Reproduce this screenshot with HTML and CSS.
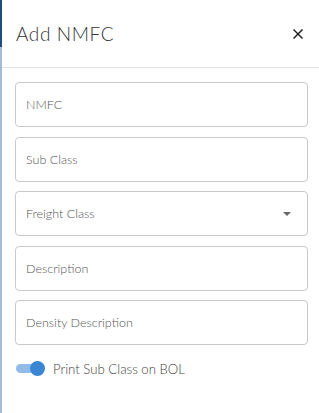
FILE: index.html
```html
<!DOCTYPE html>
<html lang="en">
<head>
    <meta charset="UTF-8">
    <meta name="viewport" content="width=device-width, initial-scale=1.0">
    <title>Add NMFC</title>
    <link rel="stylesheet" href="styles.css">
</head>
<body>
    <div class="backdrop-edge">
        <div class="edge-top"></div>
        <div class="edge-bottom"></div>
    </div>

    <aside class="drawer">
        <header class="drawer-header">
            <h1>Add NMFC</h1>
            <button class="close" aria-label="Close">
                <svg viewBox="0 0 10 10" width="10" height="10" stroke="#222" stroke-width="1.5" stroke-linecap="square">
                    <line x1="1" y1="1" x2="9" y2="9"></line>
                    <line x1="9" y1="1" x2="1" y2="9"></line>
                </svg>
            </button>
        </header>

        <form class="drawer-body">
            <div class="field"><span class="placeholder">NMFC</span></div>
            <div class="field"><span class="placeholder">Sub Class</span></div>
            <div class="field select">
                <span class="placeholder">Freight Class</span>
                <span class="caret"></span>
            </div>
            <div class="field"><span class="placeholder">Description</span></div>
            <div class="field"><span class="placeholder">Density Description</span></div>

            <label class="toggle-row">
                <span class="toggle"><span class="knob"></span></span>
                <span class="toggle-label">Print Sub Class on BOL</span>
            </label>
        </form>
    </aside>
</body>
</html>
```

FILE: styles.css
```css
body {
    margin: 0;
    padding: 0;
    display: flex;
    min-height: 100vh;
    font-family: Lato, 'Noto Sans', sans-serif;
    color: #333;
    background-color: #fff;
}

.backdrop-edge {
    width: 2px;
    display: flex;
    flex-direction: column;
}

.edge-top {
    height: 47px;
    background-color: #1f4e7e;
}

.edge-bottom {
    flex: 1;
    background-color: #a3bbd6;
}

.drawer {
    flex: 1;
    background-color: #fff;
}

.drawer-header {
    height: 67px;
    display: flex;
    align-items: center;
    justify-content: space-between;
    padding: 0 16px 0 14px;
    border-bottom: 1px solid #e2e2e2;
}

.drawer-header h1 {
    margin: 0;
    font-size: 19px;
    font-weight: 300;
    letter-spacing: 0.6px;
    color: #333;
}

.close {
    background: none;
    border: none;
    padding: 0;
    width: 10px;
    height: 10px;
    display: flex;
}

.drawer-body {
    padding: 14px 11px 0 13px;
    display: flex;
    flex-direction: column;
    gap: 9.5px;
}

.field {
    height: 43px;
    border: 1px solid #c9c9c9;
    border-radius: 4px;
    display: flex;
    align-items: center;
    justify-content: space-between;
    padding: 0 16px 0 10px;
}

.placeholder {
    font-size: 12.5px;
    font-weight: 300;
    color: #555;
}

.caret {
    width: 0;
    height: 0;
    border-left: 4px solid transparent;
    border-right: 4px solid transparent;
    border-top: 4px solid #666;
}

.toggle-row {
    display: flex;
    align-items: center;
    gap: 9px;
    margin-top: 6px;
    padding-left: 1px;
}

.toggle {
    position: relative;
    width: 28px;
    height: 9px;
    border-radius: 5px;
    background-color: #93bbe8;
}

.knob {
    position: absolute;
    right: -1px;
    top: -3px;
    width: 15px;
    height: 15px;
    border-radius: 50%;
    background-color: #3a86d2;
}

.toggle-label {
    font-size: 13.2px;
    font-weight: 300;
    color: #444;
}
```
